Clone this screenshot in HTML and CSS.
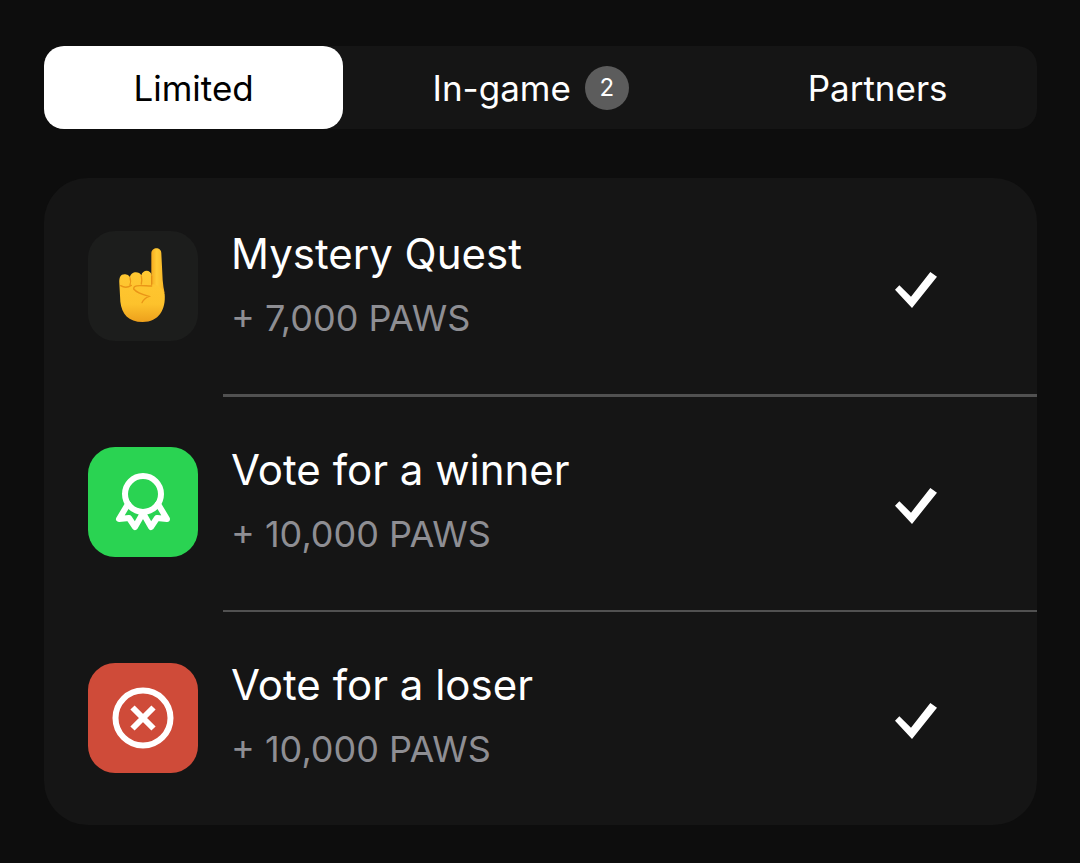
FILE: index.html
```html
<!DOCTYPE html>
<html lang="en">
<head>
<meta charset="utf-8">
<meta name="viewport" content="width=device-width, initial-scale=1">
<title>Quests</title>
<link rel="stylesheet" href="styles.css">
</head>
<body>
<main class="page">
  <div class="tabs" role="tablist" aria-label="Quest type">
    <button class="tab tab-active" type="button" role="tab" aria-selected="true">Limited</button>
    <button class="tab" type="button" role="tab" aria-selected="false">In-game <span class="badge">2</span></button>
    <button class="tab" type="button" role="tab" aria-selected="false">Partners</button>
  </div>
  <ul class="quests">
    <li class="quest">
      <svg class="tile tile-dark" viewBox="24 33 330 330" aria-hidden="true">
        <defs>
          <linearGradient id="skin" x1="0" y1="0" x2="0" y2="1">
            <stop offset="0" stop-color="#ffc832"/>
            <stop offset="0.65" stop-color="#fdc22c"/>
            <stop offset="1" stop-color="#eda01c"/>
          </linearGradient>
          <linearGradient id="finger" x1="0" y1="0" x2="1" y2="0">
            <stop offset="0" stop-color="#f5ab1f"/>
            <stop offset="0.4" stop-color="#ffcb36"/>
            <stop offset="1" stop-color="#f6b225"/>
          </linearGradient>
        </defs>
        <path fill="url(#finger)" d="M214 215V100C215 80 244 80 244 100L248 180Q250 205 254 220Z"/>
        <path fill="url(#skin)" d="M118 190C117 170 122 162 136 163Q145 163 150 171C152 153 178 152 184 166C188 148 212 148 215 166V192Q245 196 254 222C258 268 237 306 188 306C145 306 125 281 121 245Z"/>
        <path class="crease" d="M150 173Q154 185 150 194M184 168Q187 182 184 192M215 168V194M122 197Q138 207 154 196"/>
        <path class="crease" d="M161 207C160 193 180 197 215 198M161 207Q170 219 207 229Q192 235 186 248"/>
      </svg>
      <div class="quest-body">
        <div class="quest-text">
          <span class="title">Mystery Quest</span>
          <span class="reward">+ 7,000 PAWS</span>
        </div>
        <svg class="check" viewBox="47 50 126 108" role="img" aria-label="Completed"><path d="M47 103L60 90L95 124L153 50L173 64L98 158Z"/></svg>
      </div>
    </li>
    <li class="quest">
      <svg class="tile tile-green" viewBox="0 0 110 110" aria-hidden="true">
        <g class="line">
          <circle cx="55" cy="47" r="18"/>
          <path d="M40 57L31 72L41 71L47 80L55 66L63 80L69 71L79 72L70 57"/>
        </g>
      </svg>
      <div class="quest-body">
        <div class="quest-text">
          <span class="title">Vote for a winner</span>
          <span class="reward">+ 10,000 PAWS</span>
        </div>
        <svg class="check" viewBox="47 50 126 108" role="img" aria-label="Completed"><path d="M47 103L60 90L95 124L153 50L173 64L98 158Z"/></svg>
      </div>
    </li>
    <li class="quest">
      <svg class="tile tile-red" viewBox="0 0 110 110" aria-hidden="true">
        <g class="line line-butt">
          <circle cx="55" cy="55" r="27.5"/>
          <path d="M44.500 44.500L65.500 65.500M65.500 44.500L44.500 65.500"/>
        </g>
      </svg>
      <div class="quest-body">
        <div class="quest-text">
          <span class="title">Vote for a loser</span>
          <span class="reward">+ 10,000 PAWS</span>
        </div>
        <svg class="check" viewBox="47 50 126 108" role="img" aria-label="Completed"><path d="M47 103L60 90L95 124L153 50L173 64L98 158Z"/></svg>
      </div>
    </li>
  </ul>
</main>
</body>
</html>
```
FILE: styles.css
```css
* {
  box-sizing: border-box;
}

body {
  margin: 0;
  background: #0d0d0d;
  color: #fff;
  font-family: Inter, "Liberation Sans", sans-serif;
}

.page {
  display: flex;
  flex-direction: column;
  gap: 49px;
  padding: 46px 43px 38px 44px;
}

.tabs {
  display: flex;
  background: #151515;
  border-radius: 20px;
}

.tab {
  flex: 1 1 auto;
  display: flex;
  align-items: center;
  justify-content: center;
  gap: 14px;
  height: 83px;
  padding: 0 16px;
  border: 0;
  border-radius: 20px;
  background: transparent;
  color: inherit;
  font: inherit;
  font-size: 35px;
  cursor: pointer;
}

.tab-active {
  background: #fff;
  color: #000;
}

.badge {
  display: grid;
  place-items: center;
  width: 44px;
  height: 44px;
  border-radius: 50%;
  background: #5c5c5c;
  font-size: 24px;
}

.quests {
  margin: 0;
  padding: 0;
  list-style: none;
  background: #151515;
  border-radius: 44px;
  overflow: hidden;
}

.quest {
  display: flex;
  align-items: center;
  gap: 25px;
  padding-left: 44px;
}

.tile {
  flex: none;
  width: 110px;
  height: 110px;
  border-radius: 27px;
}

.tile-dark {
  background: #1c1d1c;
}

.tile-green {
  background: #2ad352;
}

.tile-red {
  background: #cf4b39;
}

.crease {
  fill: none;
  stroke: #e58a12;
  stroke-width: 4;
  stroke-linecap: round;
  opacity: 0.8;
}

.line {
  fill: none;
  stroke: #fff;
  stroke-width: 6;
  stroke-linecap: round;
  stroke-linejoin: round;
}

.line-butt {
  stroke-linecap: butt;
}

.quest-body {
  flex: 1;
  display: flex;
  align-items: center;
  justify-content: space-between;
  padding: 44px 100px 44px 8px;
}

.quest:nth-child(2) .quest-body {
  box-shadow: inset 0 3px #515151;
}

.quest:last-child .quest-body {
  padding-top: 43px;
  box-shadow: inset 0 2px #515151;
}

.quest-text {
  display: flex;
  flex-direction: column;
  line-height: 64px;
}

.title {
  font-size: 42px;
}

.reward {
  color: #8e8e93;
  font-size: 36px;
}

.check {
  flex: none;
  width: 42px;
  height: 36px;
  margin-top: 7px;
  fill: #fff;
}
```
